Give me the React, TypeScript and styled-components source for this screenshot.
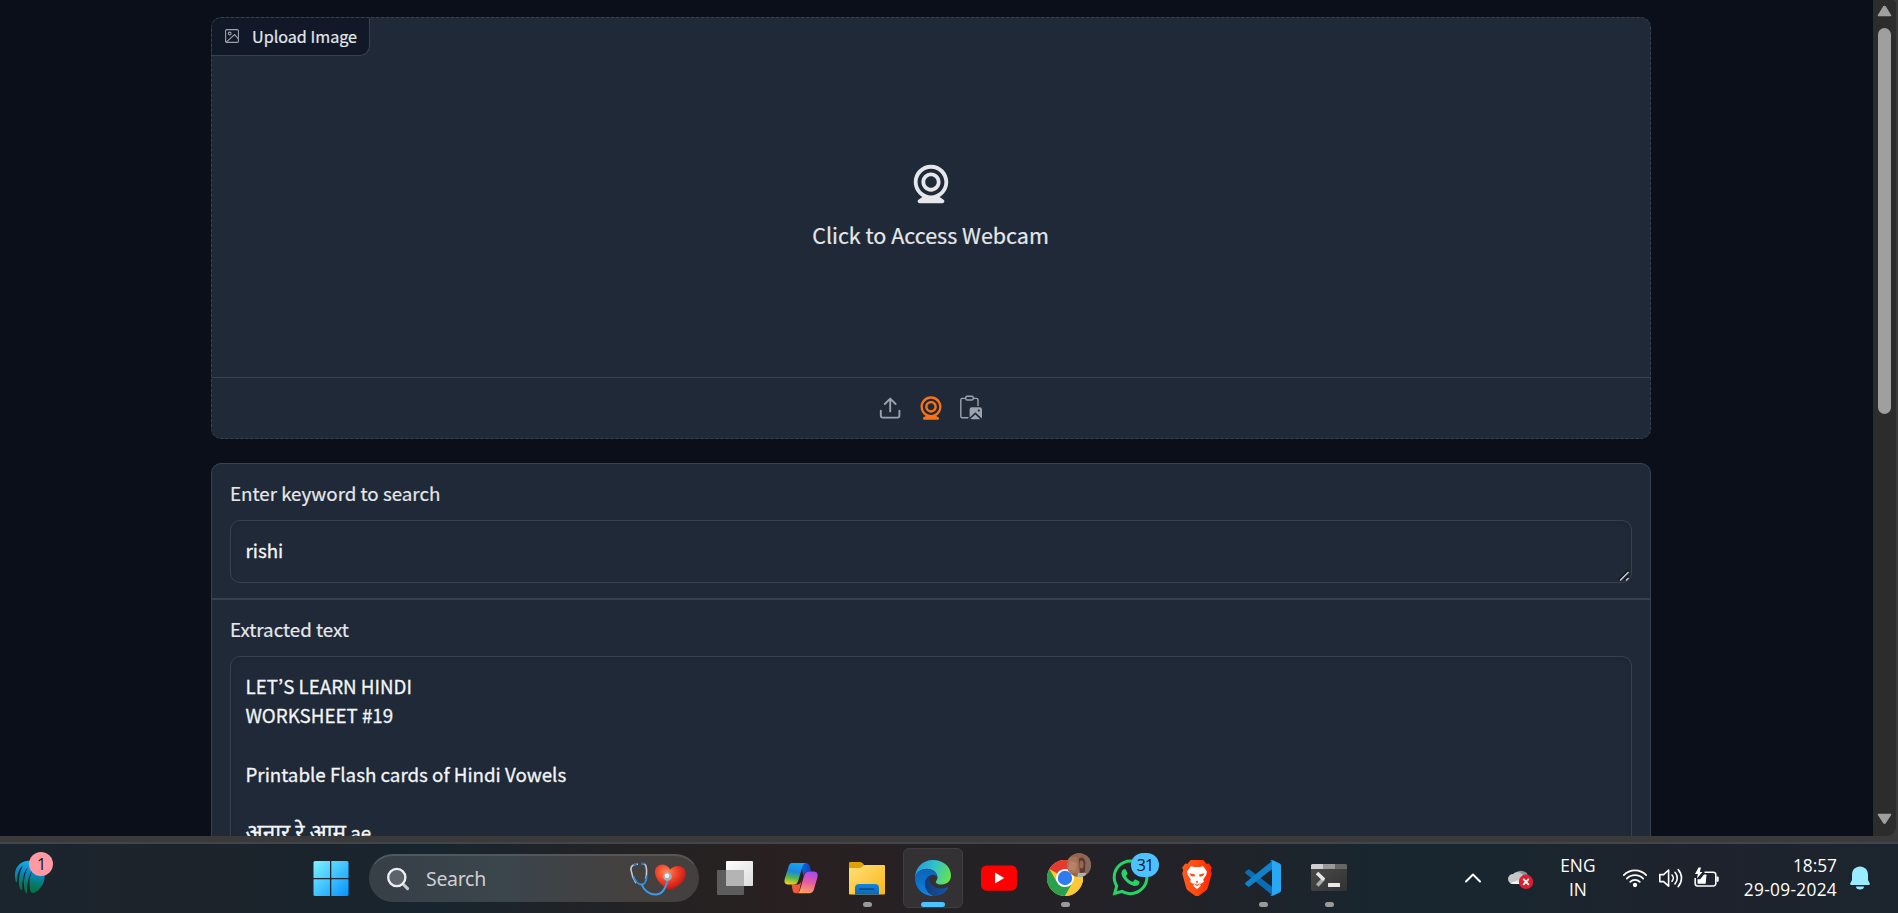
import React from "react";
import styled, { createGlobalStyle } from "styled-components";
import { FaWhatsapp } from "react-icons/fa";

const GlobalStyle = createGlobalStyle`
  *, *::before, *::after { box-sizing: border-box; }
  body { margin: 0; background: #0b0f19; overflow: hidden; }
  svg { display: block; flex-shrink: 0; }
`;

const Screen = styled.div`
  width: 1898px;
  height: 913px;
  display: flex;
  flex-direction: column;
  overflow: hidden;
  font-family: "Noto Sans CJK KR", "Noto Sans", sans-serif;
  color: #e5e7eb;
`;

const Browser = styled.div`
  height: 836px;
  flex: none;
  display: flex;
  overflow: hidden;
  background: #3b3b3b;
`;

const Page = styled.main`
  width: 1873px;
  flex: none;
  overflow: hidden;
  background: #0b0f19;
  padding: 17px 222px 0 211px;
  display: flex;
  flex-direction: column;
  gap: 24px;
`;

/* image input */

const UploadCard = styled.section`
  position: relative;
  height: 422px;
  flex: none;
  border: 1px dashed #374151;
  border-radius: 10px;
  background: #1f2937;
  display: flex;
  flex-direction: column;
  overflow: hidden;
`;

const BlockLabel = styled.div`
  position: absolute;
  top: -1px;
  left: -1px;
  width: 159px;
  height: 39px;
  padding-left: 14px;
  display: flex;
  align-items: center;
  gap: 13px;
  border: 1px solid #374151;
  border-width: 0 1px 1px 0;
  border-radius: 10px 0 10px 0;
  background: #111827;
  color: #9ca3af;
`;

const LabelText = styled.span`
  font-size: 16.15px;
  line-height: 20px;
  color: #e5e7eb;
  -webkit-text-stroke: 0.2px currentColor;
  white-space: nowrap;
`;

const WebcamPrompt = styled.button`
  flex: 1;
  border: 0;
  background: none;
  padding: 0;
  color: #e5e7eb;
  font-family: inherit;
  display: flex;
  flex-direction: column;
  align-items: center;
  padding: 143px 1px 0 0;
  gap: 6px;
`;

const PromptText = styled.span`
  font-size: 21.5px;
  line-height: 44px;
  -webkit-text-stroke: 0.2px currentColor;
  white-space: nowrap;
`;

const SourceBar = styled.div`
  height: 61px;
  flex: none;
  border-top: 1px solid #374151;
  display: flex;
  align-items: center;
  justify-content: center;
  gap: 12.5px;
  padding: 0 1px 1px 0;
`;

const SourceButton = styled.button<{ $active?: boolean }>`
  width: 28px;
  height: 28px;
  padding: 0;
  border: 0;
  background: none;
  display: flex;
  align-items: center;
  justify-content: center;
  color: ${(p) => (p.$active ? "#f97316" : "#9ca3af")};
`;

/* text fields */

const Form = styled.section`
  flex: none;
  height: 600px;
  border: 1px solid #374151;
  border-radius: 10px;
  background: #374151;
  display: flex;
  flex-direction: column;
  gap: 2px;
  overflow: hidden;
`;

const Field = styled.div<{ $height: number }>`
  height: ${(p) => p.$height}px;
  flex: none;
  background: #1f2937;
  padding: 14px 18px;
  display: flex;
  flex-direction: column;
  gap: 12px;
`;

const FieldLabel = styled.label`
  font-size: 18.75px;
  line-height: 30px;
  color: #e5e7eb;
  -webkit-text-stroke: 0.2px currentColor;
  white-space: nowrap;
`;

const TextBox = styled.div<{ $height: number }>`
  position: relative;
  height: ${(p) => p.$height}px;
  flex: none;
  border: 1px solid #374151;
  border-radius: 10px;
  padding: 14px 14.5px;
  font-size: 18.75px;
  line-height: 29.2px;
  color: #f3f4f6;
  -webkit-text-stroke: 0.3px currentColor;
  box-shadow: inset 0 2px 4px rgba(0, 0, 0, 0.06);
`;

const TextLine = styled.div`
  height: 29.2px;
  white-space: pre;
`;

const Hindi = styled.span`
  font-size: 22.5px;
  line-height: 20px;
`;

const Grip = styled.svg`
  position: absolute;
  right: 2px;
  bottom: 1px;
`;

/* scrollbar */

const Scrollbar = styled.div`
  width: 23px;
  flex: none;
  background: #2c2c2c;
  border-radius: 0 4px 9px 0;
  display: flex;
  flex-direction: column;
  align-items: center;
  justify-content: space-between;
  padding: 5px 0 11px;
`;

const ThumbTrack = styled.div`
  flex: 1;
  padding-top: 11px;
`;

const Thumb = styled.div`
  width: 13px;
  height: 386px;
  border-radius: 7px;
  background: #9f9f9f;
`;

const WindowEdge = styled.div`
  height: 8px;
  flex: none;
  background: linear-gradient(#3a3a3a 0 6px, #42464a 6px 8px);
`;

/* taskbar */

const Taskbar = styled.footer`
  height: 69px;
  flex: none;
  display: flex;
  justify-content: space-between;
  background: linear-gradient(
    90deg,
    #1a252d 0,
    #1d232b 170px,
    #18252e 430px,
    #242223 650px,
    #292020 790px,
    #252124 920px,
    #222228 1180px,
    #18262f 1390px,
    #1a262f 1520px,
    #1e222c 1700px,
    #1c252e 1898px
  );
  font-family: "Open Sans", "Noto Sans", sans-serif;
  color: #fff;
`;

const WidgetArea = styled.div`
  width: 301px;
  padding: 8px 0 0 14px;
`;

const IconWrap = styled.div`
  position: relative;
  width: 36px;
  height: 36px;
`;

const WidgetWrap = styled(IconWrap)`
  padding-top: 8px;
`;

const Badge = styled.span<{ $left: number; $top: number; $width: number; $bg: string }>`
  position: absolute;
  left: ${(p) => p.$left}px;
  top: ${(p) => p.$top}px;
  width: ${(p) => p.$width}px;
  height: 24px;
  border-radius: 12px;
  background: ${(p) => p.$bg};
  color: #10151c;
  font-size: 16px;
  line-height: 24px;
  letter-spacing: -1px;
  text-align: center;
`;

const Avatar = styled.svg`
  position: absolute;
  left: 20px;
  top: -7px;
`;

const Apps = styled.div`
  flex: 1;
  display: flex;
  gap: 6px;
  padding-top: 4px;
`;

const Tile = styled.div<{ $active?: boolean }>`
  width: 60px;
  height: 60px;
  flex: none;
  border-radius: 6px;
  border: 1px solid ${(p) => (p.$active ? "#403e41" : "transparent")};
  background: ${(p) => (p.$active ? "#343135" : "transparent")};
  padding-top: 11px;
  display: flex;
  flex-direction: column;
  align-items: center;
  gap: 6px;
`;

const Running = styled.i<{ $active?: boolean }>`
  display: block;
  width: ${(p) => (p.$active ? 24 : 9)}px;
  height: 5px;
  border-radius: 3px;
  background: ${(p) => (p.$active ? "#4cc2ff" : "#9a9a9a")};
`;

const WhatsAppGlyph = styled(FaWhatsapp)`
  margin: -3px;
  color: #25d366;
`;

const SearchBox = styled.div`
  width: 330px;
  height: 48px;
  margin: 6px 0 0 2px;
  flex: none;
  border-radius: 24px;
  border: 1px solid rgba(255, 255, 255, 0.14);
  border-top: 2px solid rgba(255, 255, 255, 0.24);
  background: linear-gradient(90deg, #373f47, #3a454c 40%, #444141 75%, #454040);
  background-clip: padding-box;
  display: flex;
  align-items: center;
  padding: 0 11px 0 16px;
`;

const SearchText = styled.span`
  flex: 1;
  margin-left: 16px;
  padding-bottom: 1px;
  font-family: "Noto Sans", sans-serif;
  font-size: 19.5px;
  letter-spacing: -0.3px;
  color: #cfd0d1;
`;

const Tray = styled.div`
  width: 434px;
  flex: none;
  display: flex;
  align-items: center;
  padding: 0 28px 1px 0;
`;

const TrayItem = styled.div<{ $gap?: number; $shift?: number }>`
  margin-left: ${(p) => p.$gap ?? 0}px;
  padding-top: ${(p) => p.$shift ?? 0}px;
`;

const TrayText = styled.div<{ $align: string; $width: number; $gap: number }>`
  width: ${(p) => p.$width}px;
  margin-left: ${(p) => p.$gap}px;
  text-align: ${(p) => p.$align};
  font-size: 17.3px;
  line-height: 24px;
  white-space: nowrap;
  display: flex;
  flex-direction: column;
`;

const DateText = styled.span`
  letter-spacing: 0.3px;
`;

const ImageIcon = () => (
  <svg width="14" height="14" viewBox="0 0 14 14" fill="none" stroke="currentColor" strokeWidth="1.1">
    <rect x="0.600" y="0.600" width="12.800" height="12.800" rx="1.200" />
    <circle cx="4.700" cy="4.500" r="1.400" />
    <path d="M13.400 10 9.600 5.600 1.200 13.200" />
  </svg>
);

const WebcamIcon = ({ size }: { size: number }) => (
  <svg width={size} height={size} viewBox="0 0 24 24" fill="currentColor">
    <path d="M12 2c-4.963 0-9 4.038-9 9c0 3.328 1.82 6.232 4.513 7.79l-2.067 1.378A1 1 0 0 0 6 22h12a1 1 0 0 0 .555-1.832l-2.067-1.378C19.18 17.232 21 14.328 21 11c0-4.962-4.037-9-9-9zm0 16c-3.859 0-7-3.141-7-7c0-3.86 3.141-7 7-7s7 3.14 7 7c0 3.859-3.141 7-7 7z" />
    <path d="M12 6c-2.757 0-5 2.243-5 5s2.243 5 5 5s5-2.243 5-5s-2.243-5-5-5zm0 8c-1.654 0-3-1.346-3-3s1.346-3 3-3s3 1.346 3 3s-1.346 3-3 3z" />
  </svg>
);

const UploadIcon = () => (
  <svg width="22" height="22" viewBox="0 0 22 22" fill="none" stroke="currentColor" strokeWidth="1.900" strokeLinecap="round" strokeLinejoin="round">
    <path d="M1.800 13.600v5.200a1.800 1.800 0 0 0 1.800 1.800h15a1.800 1.800 0 0 0 1.800-1.800v-5.200M11.200 14.400V1.800M5.800 7l5.400-5.400L16.600 7" />
  </svg>
);

const PasteIcon = () => (
  <svg width="24" height="26" viewBox="0 0 24 26" fill="none">
    <path d="M7 3.400H3.400A1.600 1.600 0 0 0 1.800 5v16.200a1.600 1.600 0 0 0 1.600 1.600h6M14 3.400h3.400A1.600 1.600 0 0 1 19 5v6" stroke="currentColor" strokeWidth="1.400" />
    <rect x="6.800" y="1.200" width="7.400" height="3.800" rx="1.300" stroke="currentColor" strokeWidth="1.400" />
    <rect x="10.600" y="12.200" width="12.400" height="12" rx="2.200" fill="currentColor" />
    <circle cx="19.800" cy="15.600" r="1.100" fill="#1f2937" />
    <path d="m10.200 24 6.100-5.600 6.300 6" stroke="#1f2937" strokeWidth="1.500" />
  </svg>
);

const SportsIcon = () => (
  <svg width="32" height="34" viewBox="0 0 32 34">
    <defs>
      <linearGradient id="sp" gradientUnits="userSpaceOnUse" x1="20" y1="0" x2="14" y2="34">
        <stop offset="0" stopColor="#14b8ee" />
        <stop offset="0.4" stopColor="#0a88c4" />
        <stop offset="0.7" stopColor="#077a62" />
        <stop offset="1" stopColor="#066b3e" />
      </linearGradient>
    </defs>
    <g fill="url(#sp)">
      <path d="M14 .8C5 1.500 0 9 1 17.500c.2 3 1 5.200 2.200 4.800C3 15 5 8 9 5.500 7 9 4.500 16 5 24c.3 3.500 1.500 6.500 3.300 6C8 21 9.500 12 14 7c-3 6-4.500 12-4 19 .3 4 1.200 7 3 7.800C12.800 25 14.500 15 19 9c-3 6-4 12-3.400 17 .3 4 1 7 2 6.500.9.800 2 .8 3.400 0C25.500 30 30 25 30.600 17 31 7 24 .3 14 .8Z" />
    </g>
  </svg>
);

const StartIcon = () => (
  <svg width="36" height="36" viewBox="0 0 36 36">
    <defs>
      <linearGradient id="st" gradientUnits="userSpaceOnUse" x1="0" y1="0" x2="36" y2="36">
        <stop offset="0" stopColor="#80f5ff" />
        <stop offset="0.5" stopColor="#42c4ff" />
        <stop offset="1" stopColor="#0591ff" />
      </linearGradient>
    </defs>
    <g fill="url(#st)">
      <path d="M2 1h15v17H.5V2.500A1.500 1.500 0 0 1 2 1Z" />
      <path d="M18.300 1H34a1.500 1.500 0 0 1 1.500 1.500V18H18.300Z" />
      <path d="M.5 19.200H17V36H2a1.500 1.500 0 0 1-1.500-1.500Z" />
      <path d="M18.300 19.200h17.200v15.300A1.500 1.500 0 0 1 34 36H18.300Z" />
    </g>
  </svg>
);

const MagnifierIcon = () => (
  <svg width="24" height="24" viewBox="0 0 24 24" fill="none">
    <path d="m17 17 4.600 4.600" stroke="#c9cccf" strokeWidth="3" strokeLinecap="round" />
    <circle cx="10.800" cy="10.500" r="8.600" fill="#5b646b" stroke="#eef0f2" strokeWidth="2.300" />
  </svg>
);

const StethoscopeIcon = () => (
  <svg width="58" height="36" viewBox="0 0 58 36" fill="none">
    <defs>
      <radialGradient id="ht" cx="0.380" cy="0.300" r="0.750">
        <stop offset="0" stopColor="#ff8a5a" />
        <stop offset="0.45" stopColor="#f04428" />
        <stop offset="1" stopColor="#b80c12" />
      </radialGradient>
    </defs>
    <path d="M41 29C33 26 26 18 26 11c0-6 6-9 11-6.500 2 1 3.200 2.500 4.300 4C44 5.500 48 4 52 5.500c5 2 6 7 3.500 12C52.500 23.500 47 27 41 29Z" fill="url(#ht)" />
    <path d="M9 3.200C5 3 1.400 4.500 2 9c.6 5 3 10 5 13" stroke="#c4cbd2" strokeWidth="1.600" />
    <path d="M13 2.800c4-.6 4.500 3 4.600 7 .1 3-.4 6-1 8" stroke="#c4cbd2" strokeWidth="1.600" />
    <path d="M4.500 15.500c1.500 4 4.500 8 8 8s5-4 5.200-9" stroke="#2f8fe0" strokeWidth="1.800" />
    <path d="m4.500 3.800 3-1M12 2.800l3.500-.3" stroke="#2a6fd0" strokeWidth="2" />
    <path d="M12.500 23c2 6 8 11 15 10.500 7-.6 10-8 11.500-17" stroke="#3f9bea" strokeWidth="2" />
    <circle cx="38.500" cy="15.500" r="4.300" fill="#a9b0b5" />
    <circle cx="38" cy="14.800" r="2.200" fill="#edf0f2" />
  </svg>
);

const TaskViewIcon = () => (
  <svg width="36" height="36" viewBox="0 0 36 36">
    <defs>
      <linearGradient id="tv" x1="0" y1="0" x2="1" y2="1">
        <stop offset="0" stopColor="#fff" />
        <stop offset="1" stopColor="#dcdcdc" />
      </linearGradient>
    </defs>
    <rect x="9" y="1" width="27" height="25" rx="1" fill="url(#tv)" />
    <rect x="0" y="10" width="27" height="25" rx="1" fill="#5d5d5d" />
    <rect x="9" y="10" width="18" height="16" fill="#b4b4b4" />
  </svg>
);

const CopilotIcon = () => (
  <svg width="36" height="36" viewBox="0 0 36 36">
    <defs>
      <linearGradient id="ca" x1="0.500" y1="0" x2="0.300" y2="1">
        <stop offset="0" stopColor="#15a5f5" />
        <stop offset="0.4" stopColor="#1e86dc" />
        <stop offset="0.68" stopColor="#52b552" />
        <stop offset="1" stopColor="#f5d21c" />
      </linearGradient>
      <linearGradient id="cb" x1="0.600" y1="0" x2="0.400" y2="1">
        <stop offset="0" stopColor="#a84af0" />
        <stop offset="0.5" stopColor="#e95c9c" />
        <stop offset="1" stopColor="#ffa45c" />
      </linearGradient>
      <linearGradient id="cc" x1="0" y1="0" x2="1" y2="0">
        <stop offset="0" stopColor="#0d65dd" />
        <stop offset="1" stopColor="#1740b4" />
      </linearGradient>
    </defs>
    <path d="M18 3h4.500c3 0 4 2 4.500 4l1.300 4.500h-3c-3 0-4 1.500-5 4.500Z" fill="url(#cc)" />
    <path d="M10.500 24.500h4c2 0 3-1.500 4-4L16.500 30c-.7 2.200-2 3.200-4 3.200-1.500 0-2.400-1.200-2.900-3l-1-5.700Z" fill="#f0583c" />
    <path d="M9 3h14c-2 .3-3 1.800-3.700 4l-4 13.500c-.8 2.600-2 4-4.500 4H5.500c-4 0-4.700-2.500-3.500-6.500L5.300 7.500C6.300 4.500 7 3 9 3Z" fill="url(#ca)" />
    <path d="M26 11.500h4.500c4 0 4.800 2.800 3.700 6.500l-3 10.500c-1 3.300-2 4.700-5 4.700H13c2 0 3.300-1 4-3.200L21 16c.9-3 2-4.500 5-4.500Z" fill="url(#cb)" />
  </svg>
);

const FolderIcon = () => (
  <svg width="36" height="36" viewBox="0 0 36 36">
    <defs>
      <linearGradient id="fo" x1="0" y1="0" x2="1" y2="1">
        <stop offset="0" stopColor="#ffe07a" />
        <stop offset="1" stopColor="#fbb716" />
      </linearGradient>
      <linearGradient id="fb" x1="0" y1="0" x2="0" y2="1">
        <stop offset="0" stopColor="#1482dc" />
        <stop offset="1" stopColor="#0b68b8" />
      </linearGradient>
    </defs>
    <path d="M1 2h9.500c1.500 0 2.500.5 3.500 1.500L16 6v5H0V3a1 1 0 0 1 1-1Z" fill="#e0a008" />
    <path d="M0 8h11c2 0 3-3 5-3h19a1 1 0 0 1 1 1v27.500a1 1 0 0 1-1 1H1a1 1 0 0 1-1-1Z" fill="url(#fo)" />
    <path d="M6 34.500V28a4 4 0 0 1 4-4h16a4 4 0 0 1 4 4v6.500Z" fill="url(#fb)" />
    <path d="M11 29.200h13.500" stroke="#0c4c86" strokeWidth="1.800" strokeLinecap="round" />
  </svg>
);

const EdgeIcon = () => (
  <svg width="36" height="36" viewBox="0 0 36 36">
    <defs>
      <linearGradient id="eg" x1="0" y1="0.300" x2="1" y2="0.600">
        <stop offset="0" stopColor="#1b9de0" />
        <stop offset="0.5" stopColor="#35c1c8" />
        <stop offset="1" stopColor="#66e34c" />
      </linearGradient>
      <linearGradient id="eb" x1="0.300" y1="0" x2="0.400" y2="1">
        <stop offset="0" stopColor="#0c62b6" />
        <stop offset="1" stopColor="#0a84df" />
      </linearGradient>
      <linearGradient id="ed" x1="0" y1="0" x2="1" y2="0">
        <stop offset="0" stopColor="#123a7c" />
        <stop offset="1" stopColor="#1257a4" />
      </linearGradient>
    </defs>
    <path d="M0 18C0 8 7.500 0 18 0c10.500 0 18 7 18 15.500 0 5.500-4 9-9.300 9-3.700 0-5.900-1.300-5.900-2.600 0-1 1.700-1.600 1.700-4.400 0-5-5-8.800-10.500-8.800C5.500 8.700 1 12.500 0 18Z" fill="url(#eg)" />
    <path d="M0 17.500C1.500 11.500 6.500 8.800 12 9c6 .2 10.500 4 10.500 8.500-1-2-3.500-3.200-6-2.500-3.500 1-6.500 6-6 11.500.6 5 5 9 9.500 9.500C8 37 0 28.500 0 17.500Z" fill="url(#eb)" />
    <path d="M14 15.800c-3.700 3-5 6.700-3.800 11C12 32.800 16.500 36 20 36c6 0 11-4 13-7.800.5-1-.2-1.400-1-1-3 1.600-8 1.800-11.500.3-4.500-2-7-6-6.500-11.700Z" fill="url(#ed)" />
  </svg>
);

const YoutubeIcon = () => (
  <svg width="36" height="36" viewBox="0 0 36 36">
    <rect x="0" y="5.500" width="36" height="25.200" rx="5.500" fill="#f00" />
    <path d="m14 12.500 9.300 5.500-9.300 5.500Z" fill="#fff" />
  </svg>
);

const ChromeIcon = () => (
  <svg width="36" height="36" viewBox="0 0 36 36">
    <circle cx="18" cy="18" r="18" fill="#fcc934" />
    <path d="M18 18 2.410 9A18 18 0 0 1 33.590 9L18 9Z" fill="#e33b2e" />
    <path d="M2.410 9A18 18 0 0 0 18 36L25.800 22.500 18 18 10.200 22.500Z" fill="#2a9f4c" />
    <path d="M18 9h15.590A18 18 0 0 1 18 36l7.800-13.500Z" fill="#fcc934" />
    <circle cx="18" cy="18" r="9.100" fill="#fff" />
    <circle cx="18" cy="18" r="7.200" fill="#2f7cf0" />
  </svg>
);

const ProfilePhoto = () => (
  <Avatar width="24" height="24" viewBox="0 0 24 24">
    <defs>
      <clipPath id="pf"><circle cx="12" cy="12" r="12" /></clipPath>
    </defs>
    <g clipPath="url(#pf)">
      <rect width="24" height="24" fill="#94654f" />
      <path d="M0 4h10l2 16H0Z" fill="#a8745a" />
      <path d="M3 8l7 2-2 8-7-2Z" fill="#b8826a" />
      <path d="M12 6c3-3 6-1 6.500 4l-.5 9-5 1Z" fill="#5e3a2f" />
      <ellipse cx="14.500" cy="11.500" rx="2" ry="4" fill="#9a6852" />
      <path d="M19.500 0H24v24h-6Z" fill="#85695f" />
      <path d="M11 20h8v5H10Z" fill="#a3b4bd" />
    </g>
  </Avatar>
);

const BraveIcon = () => (
  <svg width="36" height="36" viewBox="0 0 36 36">
    <defs>
      <linearGradient id="br" x1="0" y1="0" x2="1" y2="0">
        <stop offset="0" stopColor="#ff5a1f" />
        <stop offset="0.5" stopColor="#ff4a10" />
        <stop offset="1" stopColor="#ff2400" />
      </linearGradient>
    </defs>
    <path d="M11.800 0h12.400l3.600 4 2-.4 3 4-1 3 1 2.800-4 14.600a5 5 0 0 1-2 2.800L19.500 36h-3L9.200 30.800a5 5 0 0 1-2-2.800L3.200 13.400l1-2.800-1-3 3-4 2 .4Z" fill="url(#br)" />
    <path d="m8 11.500 3.800-5.300 3.400.9h5.600l3.400-.9 3.800 5.300-.8 3.600-3 4.400.7 2.300-4 2.700 1 1.200-3.900 3.200-3.900-3.200 1-1.200-4-2.700.7-2.300-3-4.400Z" fill="#fff" />
    <path d="m10.500 13.300 5.600 1.200-.8 2.200-3.300-.8Zm15 0-5.600 1.200.8 2.200 3.300-.8ZM18 20.500l1.200 1.400-1.200 1.300-1.200-1.300ZM13.500 22.500 18 24.700l4.500-2.200L18 26.200Z" fill="#ff4a10" />
  </svg>
);

const CodeIcon = () => (
  <svg width="36" height="36" viewBox="0 0 36 36">
    <path d="m.6 11.600 2-1.900a1.400 1.400 0 0 1 1.800-.1L27 26.800V35L.6 13.600a1.400 1.400 0 0 1 0-2Z" fill="#0a6cb4" />
    <path d="m.6 24.400 2 1.900a1.400 1.400 0 0 0 1.800.1L27 9.200V1L.6 22.400a1.400 1.400 0 0 0 0 2Z" fill="#1182ca" />
    <path d="M26.200 35.700c-.6-.2-1-.7-1.200-1 .8.6 2 .1 2-1V2.300c0-1.100-1.200-1.600-2-1 .2-.4.7-.8 1.200-1 .6-.2 1.200-.2 1.700 0l6.800 3.200c.8.400 1.300 1.200 1.300 2v25c0 .8-.5 1.600-1.300 2l-6.800 3.200c-.5.200-1.200.2-1.700 0Z" fill="#28a8f2" />
  </svg>
);

const TerminalIcon = () => (
  <svg width="36" height="36" viewBox="0 0 36 36">
    <defs>
      <linearGradient id="te" x1="0" y1="0" x2="1" y2="1">
        <stop offset="0" stopColor="#4c4c4c" />
        <stop offset="1" stopColor="#323232" />
      </linearGradient>
    </defs>
    <rect x="0" y="4" width="36" height="27" rx="1.500" fill="url(#te)" />
    <path d="M1.500 4H12v5H0V5.500A1.500 1.500 0 0 1 1.500 4Z" fill="#cfcfcf" />
    <path d="M12 4h12v5H12Z" fill="#999" />
    <path d="M24 4h10.500A1.500 1.500 0 0 1 36 5.500V9H24Z" fill="#666" />
    <path d="m12.800 18.500-6.500 7" stroke="#aaa" strokeWidth="3.600" />
    <path d="m6 13 7 6.800" stroke="#e6e6e6" strokeWidth="3.600" />
    <rect x="17" y="23" width="12" height="4" rx="0.500" fill="#e8e8e8" />
  </svg>
);

const ChevronIcon = () => (
  <svg width="18" height="12" viewBox="0 0 18 12" fill="none" stroke="#fff" strokeWidth="2" strokeLinecap="round" strokeLinejoin="round">
    <path d="m2 9.500 7-7 7 7" />
  </svg>
);

const CloudIcon = () => (
  <svg width="26" height="22" viewBox="0 0 26 22">
    <path d="M7 6a7 6 0 0 1 13 1.500L21 12H9Z" fill="#8e9296" />
    <path d="M5 16a5 5 0 0 1 0-10 6 6 0 0 1 9 0c2 1 2 5 1 10Z" fill="#c4c6c8" />
    <path d="M2 15a5 5 0 0 0 3 1h8v-4.500Z" fill="#f4f5f6" />
    <circle cx="18" cy="13.800" r="7.200" fill="#dc1f2e" />
    <path d="m15.200 10.800 5.600 6m0-6-5.600 6" stroke="#fff" strokeWidth="1.800" />
  </svg>
);

const WifiIcon = () => (
  <svg width="26" height="20" viewBox="0 0 26 20" fill="none" stroke="#fff" strokeWidth="1.700" strokeLinecap="round">
    <path d="M1.800 7.200a15.500 15.500 0 0 1 22.400 0M4.800 10.600a11.500 11.500 0 0 1 16.400 0M8.200 13.800a6.800 6.800 0 0 1 9.600 0" />
    <circle cx="13" cy="17" r="1.300" fill="#fff" />
  </svg>
);

const VolumeIcon = () => (
  <svg width="26" height="20" viewBox="0 0 26 20" fill="none" stroke="#fff" strokeWidth="1.600" strokeLinecap="round" strokeLinejoin="round">
    <path d="M1.800 6.600h3.800L10.600 2v16.200l-5-4.600H1.800ZM14 7a4.500 4.500 0 0 1 0 6.200M17 4.300a8.600 8.600 0 0 1 0 11.600M20.200 1.600a12.600 12.600 0 0 1 0 17" />
  </svg>
);

const BatteryIcon = () => (
  <svg width="26" height="22" viewBox="0 0 26 22" fill="none">
    <path d="M10.500 5.200h8.800a2.500 2.500 0 0 1 2.500 2.500v8.800a2.500 2.500 0 0 1-2.500 2.500H3.600A2.500 2.500 0 0 1 1.200 16.500V11" stroke="#fff" strokeWidth="1.600" />
    <path d="M22.500 9.500h1.200a1 1 0 0 1 1 1v3.200a1 1 0 0 1-1 1h-1.200Z" fill="#fff" />
    <path d="M10 7.500h2.500l-.8 9.300H3.500v-4.500h2.600Z" fill="#fff" />
    <path d="M4.500.5 1 7h2.800L3 11.500 8.500 5H5.800L7 .5Z" fill="#fff" />
  </svg>
);

const BellIcon = () => (
  <svg width="20" height="24" viewBox="0 0 20 24" fill="#99ebff">
    <path d="M10 .5c4.800 0 8 3.600 8 8.200V14l1.800 3.600c.3.700 0 1.400-.8 1.400H1c-.8 0-1.100-.7-.8-1.400L2 14V8.700C2 4.100 5.200.5 10 .5ZM6 20.500h8a4 3 0 0 1-8 0Z" />
  </svg>
);

const Arrow = ({ down }: { down?: boolean }) => (
  <svg width="15" height="12" viewBox="0 0 15 12">
    <path
      d={down ? "M1.500 1.500h12L8.300 9.700a1 1 0 0 1-1.600 0Z" : "M1.500 10.500h12L8.300 1.800a1 1 0 0 0-1.600 0Z"}
      fill="#9f9f9f"
      stroke="#9f9f9f"
      strokeWidth="1.500"
      strokeLinejoin="round"
    />
  </svg>
);

const extracted: React.ReactNode[] = [
  "LET’S LEARN HINDI",
  "WORKSHEET #19",
  "",
  "Printable Flash cards of Hindi Vowels",
  "",
  <><Hindi>अनार रे आम</Hindi> ae</>,
];

const apps: { icon: React.ReactNode; running?: boolean; active?: boolean }[] = [
  { icon: <TaskViewIcon /> },
  { icon: <CopilotIcon /> },
  { icon: <FolderIcon />, running: true },
  { icon: <EdgeIcon />, running: true, active: true },
  { icon: <YoutubeIcon /> },
  { icon: <><ChromeIcon /><ProfilePhoto /></>, running: true },
  {
    icon: (
      <>
        <WhatsAppGlyph size={41} />
        <Badge $left={18} $top={-7} $width={28} $bg="#4cc2ff">31</Badge>
      </>
    ),
  },
  { icon: <BraveIcon /> },
  { icon: <CodeIcon />, running: true },
  { icon: <TerminalIcon />, running: true },
];

export default function App() {
  return (
    <Screen>
      <GlobalStyle />
      <Browser>
        <Page>
          <UploadCard>
            <BlockLabel>
              <ImageIcon />
              <LabelText>Upload Image</LabelText>
            </BlockLabel>
            <WebcamPrompt>
              <WebcamIcon size={46} />
              <PromptText>Click to Access Webcam</PromptText>
            </WebcamPrompt>
            <SourceBar>
              <SourceButton><UploadIcon /></SourceButton>
              <SourceButton $active><WebcamIcon size={28} /></SourceButton>
              <SourceButton><PasteIcon /></SourceButton>
            </SourceBar>
          </UploadCard>
          <Form>
            <Field $height={134}>
              <FieldLabel>Enter keyword to search</FieldLabel>
              <TextBox $height={63}>
                <TextLine>rishi</TextLine>
                <Grip width="11" height="11" viewBox="0 0 11 11" fill="none">
                  <path d="M.5 10 10 .5M6.500 10 10 6.500" stroke="#0b0f19" strokeWidth="1.500" />
                  <path d="M2 10.500 10.500 2M8 10.500 10.500 8" stroke="#c8cacd" strokeWidth="1.500" />
                </Grip>
              </TextBox>
            </Field>
            <Field $height={460}>
              <FieldLabel>Extracted text</FieldLabel>
              <TextBox $height={390}>
                {extracted.map((line, i) => (
                  <TextLine key={i}>{line}</TextLine>
                ))}
              </TextBox>
            </Field>
          </Form>
        </Page>
        <Scrollbar>
          <Arrow />
          <ThumbTrack><Thumb /></ThumbTrack>
          <Arrow down />
        </Scrollbar>
      </Browser>
      <WindowEdge />
      <Taskbar>
        <WidgetArea>
          <WidgetWrap>
            <SportsIcon />
            <Badge $left={15} $top={0} $width={24} $bg="#ff99a4">1</Badge>
          </WidgetWrap>
        </WidgetArea>
        <Apps>
          <Tile><StartIcon /></Tile>
          <SearchBox>
            <MagnifierIcon />
            <SearchText>Search</SearchText>
            <StethoscopeIcon />
          </SearchBox>
          {apps.map((app, i) => (
            <Tile key={i} $active={app.active}>
              <IconWrap>{app.icon}</IconWrap>
              {app.running && <Running $active={app.active} />}
            </Tile>
          ))}
        </Apps>
        <Tray>
          <ChevronIcon />
          <TrayItem $gap={26} $shift={2}><CloudIcon /></TrayItem>
          <TrayText $align="center" $width={40} $gap={24}>
            <span>ENG</span>
            <span>IN</span>
          </TrayText>
          <TrayItem $gap={24}><WifiIcon /></TrayItem>
          <TrayItem $gap={10}><VolumeIcon /></TrayItem>
          <TrayItem $gap={10}><BatteryIcon /></TrayItem>
          <TrayText $align="right" $width={100} $gap={18}>
            <span>18:57</span>
            <DateText>29-09-2024</DateText>
          </TrayText>
          <TrayItem $gap={13}><BellIcon /></TrayItem>
        </Tray>
      </Taskbar>
    </Screen>
  );
}
